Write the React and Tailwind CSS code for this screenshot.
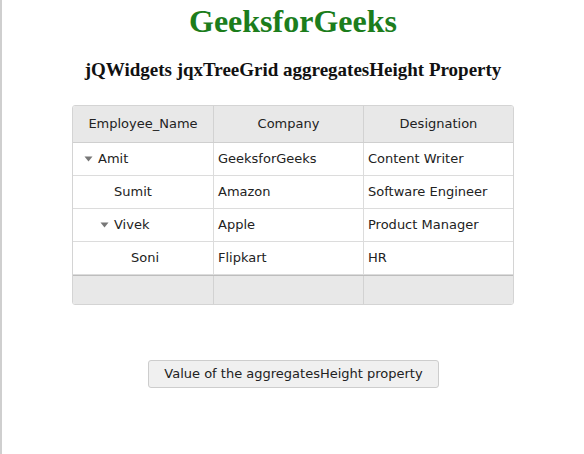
const rows = [
  { name: "Amit", company: "GeeksforGeeks", role: "Content Writer", indent: 0, arrow: true },
  { name: "Sumit", company: "Amazon", role: "Software Engineer", indent: 1, arrow: false },
  { name: "Vivek", company: "Apple", role: "Product Manager", indent: 1, arrow: true },
  { name: "Soni", company: "Flipkart", role: "HR", indent: 2, arrow: false },
];

function Arrow() {
  return (
    <svg width="9" height="6" viewBox="0 0 9 6" className="mr-[5px] shrink-0">
      <path d="M0.5 0.5 L8.5 0.5 L4.5 5.5 Z" fill="#777" />
    </svg>
  );
}

export default function App() {
  const font = { fontFamily: "'DejaVu Sans', Verdana, sans-serif" };
  return (
    <div className="min-h-[454px] border-l-2 border-[#cfcfcf] bg-white">
      <h1
        className="pt-[3px] text-center text-[32px] font-bold leading-[37px] text-[#1c7d1c]"
        style={{ fontFamily: "'Liberation Serif', 'Times New Roman', serif" }}
      >
        GeeksforGeeks
      </h1>
      <h3
        className="mt-[19px] text-center text-[19px] font-bold leading-[22px] text-[#111]"
        style={{ fontFamily: "'Liberation Serif', 'Times New Roman', serif" }}
      >
        jQWidgets jqxTreeGrid aggregatesHeight Property
      </h3>

      <div
        className="ml-[70px] mt-[24px] w-[442px] overflow-hidden rounded-[3px] border border-[#d4d4d4] text-[13px] text-[#222]"
        style={font}
      >
        <div className="grid h-[37px] grid-cols-[141px_150px_1fr] border-b border-[#cfcfcf] bg-[#e8e8e8]">
          <div className="flex items-center justify-center border-r border-[#d2d2d2]">Employee_Name</div>
          <div className="flex items-center justify-center border-r border-[#d2d2d2]">Company</div>
          <div className="flex items-center justify-center">Designation</div>
        </div>
        {rows.map((r) => (
          <div
            key={r.name}
            className="grid h-[33px] grid-cols-[141px_150px_1fr] border-b border-[#dcdcdc] bg-white"
          >
            <div
              className={`flex items-center border-r border-[#dcdcdc] ${
                r.indent === 0 ? "pl-[11px]" : r.indent === 1 && r.arrow ? "pl-[27px]" : r.indent === 1 ? "pl-[41px]" : "pl-[58px]"
              }`}
            >
              {r.arrow && <Arrow />}
              {r.name}
            </div>
            <div className="flex items-center border-r border-[#dcdcdc] pl-[4px]">{r.company}</div>
            <div className="flex items-center pl-[4px]">{r.role}</div>
          </div>
        ))}
        <div className="grid h-[29px] grid-cols-[141px_150px_1fr] border-t border-[#bdbdbd] bg-[#e8e8e8]">
          <div className="border-r border-[#d2d2d2]"></div>
          <div className="border-r border-[#d2d2d2]"></div>
          <div></div>
        </div>
      </div>

      <div className="mt-[55px] flex justify-center pl-[1px]">
        <button
          className="h-[28px] w-[291px] rounded-[3px] border border-[#cdcdcd] bg-[#f0f0f0] text-[13px] text-[#222]"
          style={font}
        >
          Value of the aggregatesHeight property
        </button>
      </div>
    </div>
  );
}
